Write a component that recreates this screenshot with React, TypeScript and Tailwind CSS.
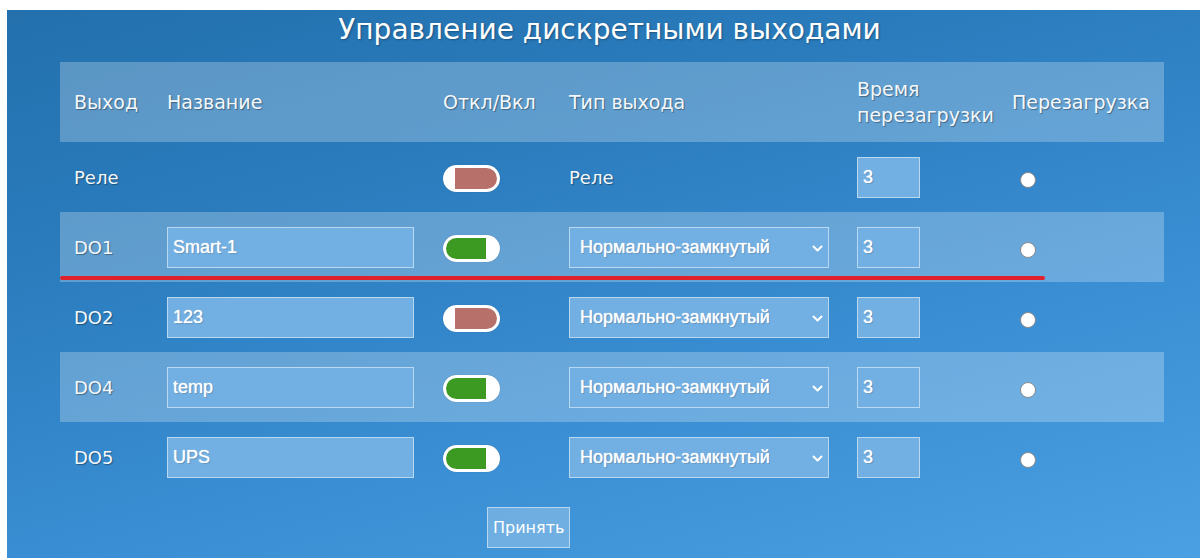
import { useState } from 'react';

type Row = { id: string; name?: string; on: boolean; type?: string; delay: string };

const ROWS: Row[] = [
  { id: 'Реле', on: false, delay: '3' },
  { id: 'DO1', name: 'Smart-1', on: true, type: 'nc', delay: '3' },
  { id: 'DO2', name: '123', on: false, type: 'nc', delay: '3' },
  { id: 'DO4', name: 'temp', on: true, type: 'nc', delay: '3' },
  { id: 'DO5', name: 'UPS', on: true, type: 'nc', delay: '3' },
];

const COLS = 'grid grid-cols-[93px_276px_126px_288px_155px_166px]';
const label = "font-['DejaVu_Sans',sans-serif] text-[18px] text-[#f4f8fc] [text-shadow:1px_1px_1px_rgba(0,0,0,0.35)]";
const field =
  "h-[41px] border border-white/50 bg-[#72b0e3] px-[5px] font-['Liberation_Sans',Arial,sans-serif] text-[18px] text-white outline-none [text-shadow:0_0_1px_rgba(255,255,255,0.9),1px_1px_1px_rgba(0,0,0,0.2)]";

function Toggle({ on }: { on: boolean }) {
  return (
    <div className="mt-[2px] flex h-[27px] w-[57px] rounded-full bg-white p-[3px] shadow-[0_0_1px_rgba(0,0,0,0.3)]">
      {on ? (
        <div className="mr-[11px] flex-1 rounded-l-full bg-[#3c9a22]" />
      ) : (
        <div className="ml-[9px] flex-1 rounded-r-full bg-[#b8716a]" />
      )}
    </div>
  );
}

function Chevron() {
  return (
    <svg width="11" height="7" viewBox="0 0 11 7" className="pointer-events-none absolute right-[6px] top-[18px]">
      <path d="M1.5 1.5 5.5 5.5l4-4" fill="none" stroke="white" strokeWidth="2" strokeLinecap="round" strokeLinejoin="round" />
    </svg>
  );
}

export default function App() {
  const [rows, setRows] = useState(ROWS);

  return (
    <div className="min-h-[558px] bg-white pl-[7px] pt-[10px]">
      <div className="h-[548px] bg-[linear-gradient(165deg,#2370ad_0%,#2a7cbd_30%,#3a8ed3_65%,#4aa0e2_100%)]">
        <h1 className="h-[52px] pl-[12px] text-center font-['DejaVu_Sans',sans-serif] text-[28px] leading-[40px] text-white [text-shadow:1px_1px_2px_rgba(0,0,0,0.3)]">
          Управление дискретными выходами
        </h1>

        <div className="relative ml-[53px] w-[1104px]">
          {/* header */}
          <div className={`${COLS} h-[80px] items-center bg-white/25 ${label} text-[19px]`}>
            <div className="pl-[14px]">Выход</div>
            <div className="pl-[14px]">Название</div>
            <div className="pl-[14px]">Откл/Вкл</div>
            <div className="pl-[14px]">Тип выхода</div>
            <div className="pl-[14px] leading-[26px]">
              Время
              <br />
              перезагрузки
            </div>
            <div className="pl-[14px]">Перезагрузка</div>
          </div>

          {rows.map((r, i) => (
            <div key={r.id} className={`${COLS} h-[70px] items-center ${i % 2 === 1 ? 'bg-white/25' : ''}`}>
              <div className={`pl-[14px] ${label}`}>{r.id}</div>
              <div className="pl-[14px]">
                {r.name !== undefined && (
                  <input
                    className={`${field} w-[247px]`}
                    value={r.name}
                    onChange={e => setRows(rs => rs.map(x => (x.id === r.id ? { ...x, name: e.target.value } : x)))}
                  />
                )}
              </div>
              <div className="pl-[14px]">
                <Toggle on={r.on} />
              </div>
              <div className="pl-[14px]">
                {r.type ? (
                  <div className="relative w-[260px]">
                    <select className={`${field} w-full appearance-none pl-[10px]`} defaultValue="nc">
                      <option value="nc">Нормально-замкнутый</option>
                      <option value="no">Нормально-разомкнутый</option>
                    </select>
                    <Chevron />
                  </div>
                ) : (
                  <span className={label}>Реле</span>
                )}
              </div>
              <div className="pl-[14px]">
                <input className={`${field} w-[63px] font-['DejaVu_Sans',sans-serif] text-[17px]`} defaultValue={r.delay} />
              </div>
              <div className="pl-[22px]">
                <div className="mt-[6px] h-[16px] w-[16px] rounded-full border border-[#8a8a8a] bg-white" />
              </div>
            </div>
          ))}

          {/* marker under DO1 */}
          <div className="absolute left-0 top-[214px] h-[4px] w-[985px] rounded-full bg-[#e0202a]" />

          <div className="pl-[427px] pt-[15px]">
            <button className="h-[41px] border border-white/50 bg-white/25 px-[5px] font-['DejaVu_Sans',sans-serif] text-[16px] text-white">
              Принять
            </button>
          </div>
        </div>
      </div>
    </div>
  );
}
